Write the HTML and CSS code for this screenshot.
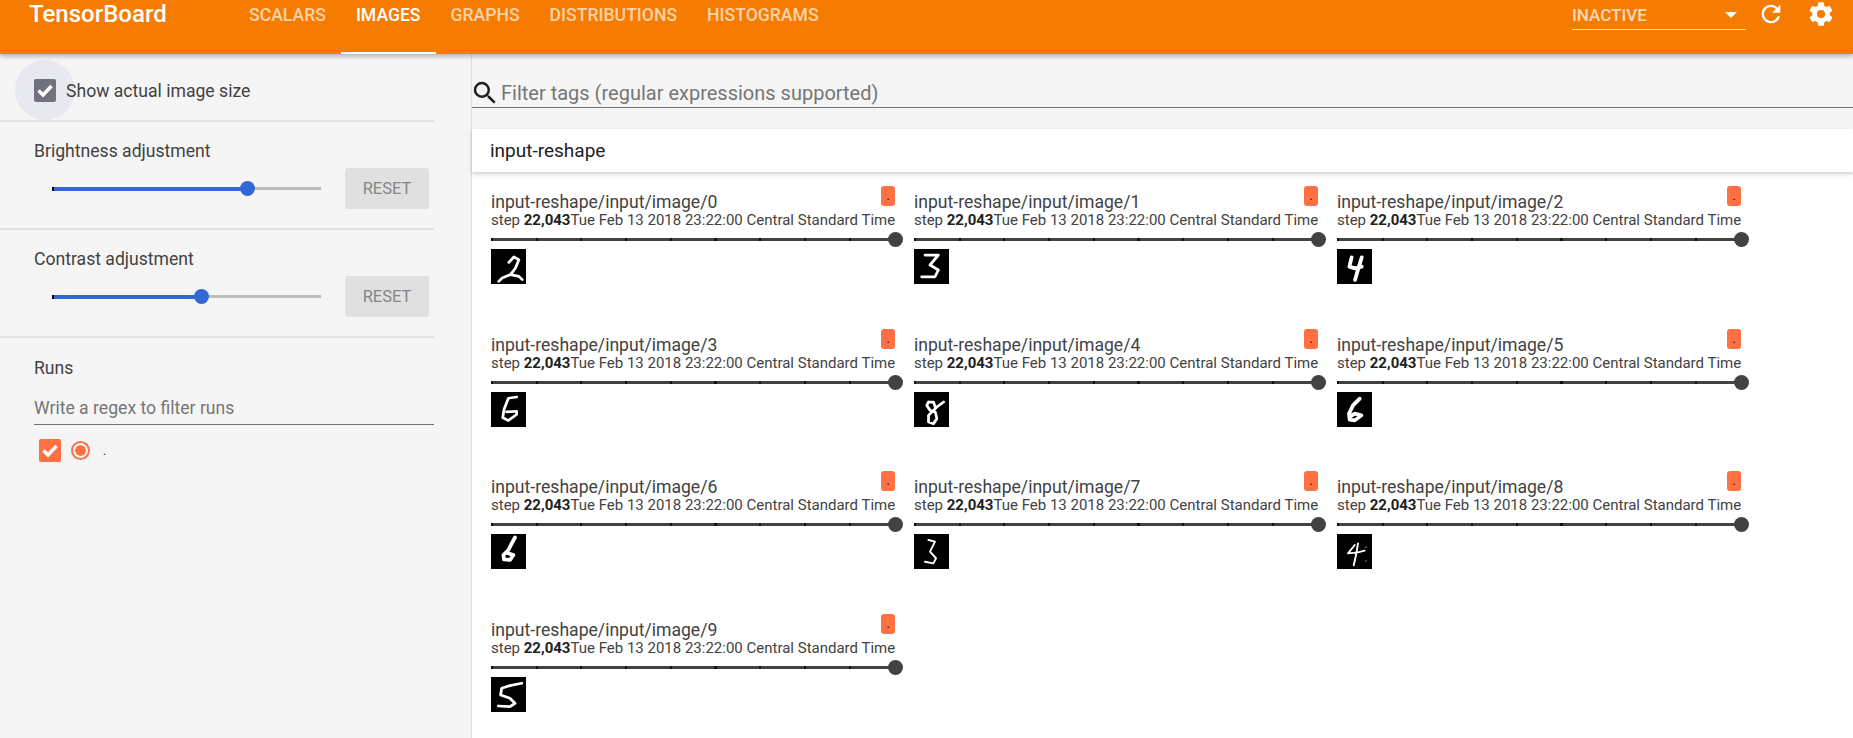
FILE: index.html
```html
<!DOCTYPE html>
<html lang="en">
<head>
  <meta charset="UTF-8">
  <title>TensorBoard</title>
  <link rel="stylesheet" href="styles.css">
</head>
<body>
  <header class="toolbar">
    <div class="brand">TensorBoard</div>
    <nav class="tabs">
      <a class="tab">SCALARS</a>
      <a class="tab active">IMAGES</a>
      <a class="tab">GRAPHS</a>
      <a class="tab">DISTRIBUTIONS</a>
      <a class="tab">HISTOGRAMS</a>
    </nav>
    <div class="status-select">
      <span>INACTIVE</span>
      <span class="arrow"></span>
    </div>
    <svg class="tool-icon reload" viewBox="0 0 24 24"><path d="M17.65 6.35A7.96 7.96 0 0 0 12 4a8 8 0 1 0 7.73 10h-2.08A6 6 0 1 1 12 6c1.66 0 3.14.69 4.22 1.78L13 11h7V4l-2.35 2.35z"/></svg>
    <svg class="tool-icon gear" viewBox="0 0 24 24"><path d="M19.43 12.98c.04-.32.07-.64.07-.98s-.03-.66-.07-.98l2.11-1.65a.5.5 0 0 0 .12-.64l-2-3.46a.5.5 0 0 0-.61-.22l-2.49 1a7.3 7.3 0 0 0-1.69-.98l-.38-2.65A.49.49 0 0 0 14 2h-4a.49.49 0 0 0-.49.42l-.38 2.65c-.61.25-1.17.59-1.69.98l-2.49-1a.49.49 0 0 0-.61.22l-2 3.46a.49.49 0 0 0 .12.64l2.11 1.65c-.04.32-.07.65-.07.98s.03.66.07.98l-2.11 1.65a.5.5 0 0 0-.12.64l2 3.46c.12.22.39.3.61.22l2.49-1c.52.4 1.08.73 1.69.98l.38 2.65c.03.24.24.42.49.42h4c.25 0 .46-.18.49-.42l.38-2.65c.61-.25 1.17-.59 1.69-.98l2.49 1c.23.09.49 0 .61-.22l2-3.46a.5.5 0 0 0-.12-.64l-2.11-1.65zM12 15.5a3.5 3.5 0 1 1 0-7 3.5 3.5 0 0 1 0 7z"/></svg>
  </header>

  <div class="page">
    <aside class="sidebar">
      <section class="side-section size-section">
        <div class="ripple"></div>
        <span class="checkbox grey"><svg viewBox="0 0 22 22"><path d="M4.5 11.5l4.5 4.5 8.5-9"/></svg></span>
        <span class="check-label">Show actual image size</span>
      </section>
      <section class="side-section">
        <div class="side-title">Brightness adjustment</div>
        <div class="adjust-row">
          <div class="range">
            <div class="range-fill fill-brightness"></div>
            <div class="range-thumb"></div>
          </div>
          <button class="reset">RESET</button>
        </div>
      </section>
      <section class="side-section">
        <div class="side-title">Contrast adjustment</div>
        <div class="adjust-row">
          <div class="range">
            <div class="range-fill fill-contrast"></div>
            <div class="range-thumb"></div>
          </div>
          <button class="reset">RESET</button>
        </div>
      </section>
      <section class="runs">
        <div class="side-title">Runs</div>
        <div class="regex">Write a regex to filter runs</div>
        <div class="run-row">
          <span class="checkbox orange"><svg viewBox="0 0 22 22"><path d="M4.5 11.5l4.5 4.5 8.5-9"/></svg></span>
          <span class="radio"></span>
          <span class="run-name">.</span>
        </div>
      </section>
    </aside>

    <main class="main">
      <div class="filter">
        <svg class="search" viewBox="0 0 24 24"><path d="M15.5 14h-.79l-.28-.27A6.47 6.47 0 0 0 16 9.5 6.5 6.5 0 1 0 9.5 16c1.61 0 3.09-.59 4.23-1.57l.27.28v.79l5 4.99L20.49 19l-4.99-5zm-6 0a4.5 4.5 0 1 1 0-9 4.5 4.5 0 0 1 0 9z"/></svg>
        <span>Filter tags (regular expressions supported)</span>
      </div>
      <div class="category">input-reshape</div>
      <div class="cards">
        <article class="card">
          <div class="card-head"><span class="card-title">input-reshape/input/image/0</span><span class="run-chip">.</span></div>
          <div class="card-step">step <b>22,043</b>Tue Feb 13 2018 23:22:00 Central Standard Time</div>
          <div class="step-slider"><div class="step-thumb"></div></div>
          <svg class="digit" viewBox="0 0 28 28"><path d="M14.3 10.7 18.3 6.4 22.3 8.5 19.6 15.2 15.6 20.5 8.9 23.2 6.2 25.9M15.6 20.5 22.3 21.9 25 24.5"/></svg>
        </article>
        <article class="card">
          <div class="card-head"><span class="card-title">input-reshape/input/image/1</span><span class="run-chip">.</span></div>
          <div class="card-step">step <b>22,043</b>Tue Feb 13 2018 23:22:00 Central Standard Time</div>
          <div class="step-slider"><div class="step-thumb"></div></div>
          <svg class="digit" viewBox="0 0 28 28"><path d="M8.8 4.8 19.5 4.8 12.8 12.8 19.5 16.8 16.8 22.2 6.1 22.2"/></svg>
        </article>
        <article class="card">
          <div class="card-head"><span class="card-title">input-reshape/input/image/2</span><span class="run-chip">.</span></div>
          <div class="card-step">step <b>22,043</b>Tue Feb 13 2018 23:22:00 Central Standard Time</div>
          <div class="step-slider"><div class="step-thumb"></div></div>
          <svg class="digit thick" viewBox="0 0 28 28"><path d="M11.7 6.7 9.9 14.1 14.4 15.5 19.8 14.1M19.8 6.7 17.1 15.5 14.4 24.8"/></svg>
        </article>
        <article class="card">
          <div class="card-head"><span class="card-title">input-reshape/input/image/3</span><span class="run-chip">.</span></div>
          <div class="card-step">step <b>22,043</b>Tue Feb 13 2018 23:22:00 Central Standard Time</div>
          <div class="step-slider"><div class="step-thumb"></div></div>
          <svg class="digit" viewBox="0 0 28 28"><path d="M20.5 4 13.9 5 10.4 14 9.4 20.6 13.9 22.8 20.5 18 20.5 15.4 12.5 15.9"/></svg>
        </article>
        <article class="card">
          <div class="card-head"><span class="card-title">input-reshape/input/image/4</span><span class="run-chip">.</span></div>
          <div class="card-step">step <b>22,043</b>Tue Feb 13 2018 23:22:00 Central Standard Time</div>
          <div class="step-slider"><div class="step-thumb"></div></div>
          <svg class="digit" viewBox="0 0 28 28"><path d="M11.6 8 10.2 10.7 12.9 14.7 17 16 18.3 21.3 15.6 25.3 11.6 24 11.6 18.7 15.6 14.7 18.3 12 23.7 8M11.6 8 15.6 8 17 12"/></svg>
        </article>
        <article class="card">
          <div class="card-head"><span class="card-title">input-reshape/input/image/5</span><span class="run-chip">.</span></div>
          <div class="card-step">step <b>22,043</b>Tue Feb 13 2018 23:22:00 Central Standard Time</div>
          <div class="step-slider"><div class="step-thumb"></div></div>
          <svg class="digit thick" viewBox="0 0 28 28"><path d="M18.2 5.3 12.8 10.7 9.6 17.3 10.1 22.1 14.2 22.7 19.5 18.7 14.2 17.3 10.7 19.5"/></svg>
        </article>
        <article class="card">
          <div class="card-head"><span class="card-title">input-reshape/input/image/6</span><span class="run-chip">.</span></div>
          <div class="card-step">step <b>22,043</b>Tue Feb 13 2018 23:22:00 Central Standard Time</div>
          <div class="step-slider"><div class="step-thumb"></div></div>
          <svg class="digit thick" viewBox="0 0 28 28"><path d="M19.2 2.7 16.6 7.5 13.9 12.8 9.9 16.8 10.4 20.3 15.2 20.8 17.9 16.8 12.5 15"/></svg>
        </article>
        <article class="card">
          <div class="card-head"><span class="card-title">input-reshape/input/image/7</span><span class="run-chip">.</span></div>
          <div class="card-step">step <b>22,043</b>Tue Feb 13 2018 23:22:00 Central Standard Time</div>
          <div class="step-slider"><div class="step-thumb"></div></div>
          <svg class="digit thin" viewBox="0 0 28 28"><path d="M11.5 4.8 16.8 6.1 12.8 14.1 17.6 19.4 15.5 23.5 8.8 22.2"/></svg>
        </article>
        <article class="card">
          <div class="card-head"><span class="card-title">input-reshape/input/image/8</span><span class="run-chip">.</span></div>
          <div class="card-step">step <b>22,043</b>Tue Feb 13 2018 23:22:00 Central Standard Time</div>
          <div class="step-slider"><div class="step-thumb"></div></div>
          <svg class="digit thin" viewBox="0 0 28 28"><path d="M14.2 8.8 8.8 15.5 16.8 14.7 22.1 13.3M16.8 7.5 15.5 15.5 13.4 25"/><rect class="digit-speck" x="22.5" y="10" width="1.2" height="1.2"/><rect class="digit-speck" x="22.5" y="21" width="1.2" height="1.2"/></svg>
        </article>
        <article class="card">
          <div class="card-head"><span class="card-title">input-reshape/input/image/9</span><span class="run-chip">.</span></div>
          <div class="card-step">step <b>22,043</b>Tue Feb 13 2018 23:22:00 Central Standard Time</div>
          <div class="step-slider"><div class="step-thumb"></div></div>
          <svg class="digit" viewBox="0 0 28 28"><path d="M24.6 5 15.2 6.9 8.5 9 7.7 14.4 15.2 17 19.2 21 15.2 23.7 5.9 23.2"/></svg>
        </article>
      </div>
    </main>
  </div>
</body>
</html>
```
FILE: styles.css
```css
html, body {
  margin: 0;
  padding: 0;
  height: 100%;
  overflow: hidden;
  background: #f5f5f5;
  font-family: Roboto, sans-serif;
  color: #212121;
}

/* top bar */
.toolbar {
  height: 54px;
  background: #f57c00;
  color: #fff;
  display: flex;
  align-items: flex-start;
  box-shadow: 0 2px 5px rgba(0, 0, 0, 0.3);
  position: relative;
  z-index: 2;
}
.brand {
  font-size: 24px;
  font-weight: 500;
  line-height: 28px;
  margin-left: 29px;
  width: 205px;
}
.tabs {
  display: flex;
  height: 54px;
  flex: 1;
}
.tab {
  box-sizing: border-box;
  padding: 0 15px;
  height: 54px;
  font-size: 17.6px;
  font-weight: 500;
  line-height: 30px;
  color: rgba(255, 255, 255, 0.67);
}
.tab.active {
  color: #fff;
  border-bottom: 2px solid #fff;
}
.status-select {
  box-sizing: border-box;
  width: 174px;
  height: 30px;
  border-bottom: 1px solid rgba(255, 255, 255, 0.75);
  display: flex;
  justify-content: space-between;
  align-items: center;
  font-size: 17px;
  font-weight: 500;
  color: rgba(255, 255, 255, 0.72);
  padding-right: 9px;
}
.arrow {
  border-left: 6px solid transparent;
  border-right: 6px solid transparent;
  border-top: 6px solid #fff;
}
.tool-icon {
  fill: #fff;
  width: 28px;
  height: 28px;
}
.reload {
  margin-left: 11px;
}
.gear {
  margin-left: 22px;
  margin-right: 18px;
}

/* layout */
.page {
  display: flex;
  height: 684px;
}
.sidebar {
  box-sizing: border-box;
  width: 472px;
  flex: none;
  border-right: 1px solid #e0e0e0;
}
.side-section {
  box-sizing: border-box;
  width: 434px;
  height: 108px;
  padding: 0 5px 0 34px;
  border-bottom: 2px solid #e0e0e0;
}
.size-section {
  height: 68px;
  display: flex;
  align-items: center;
  position: relative;
  padding-top: 6px;
}
.ripple {
  position: absolute;
  left: 15px;
  top: 6px;
  width: 60px;
  height: 60px;
  border-radius: 50%;
  background: #e8e8f1;
}
.checkbox {
  width: 22px;
  height: 23px;
  border-radius: 2px;
  flex: none;
  position: relative;
  display: block;
}
.checkbox svg {
  display: block;
  fill: none;
  stroke: #fff;
  stroke-width: 3.4;
}
.checkbox.grey {
  background: #72727f;
}
.checkbox.orange {
  background: #ff7043;
}
.check-label {
  font-size: 17.6px;
  color: #424242;
  margin: 2px 0 0 10px;
  position: relative;
}
.side-title {
  font-size: 17.6px;
  line-height: 20px;
  color: #424242;
  padding-top: 19px;
}
.adjust-row {
  display: flex;
  align-items: center;
  justify-content: space-between;
  margin-top: 7px;
}
.range {
  width: 269px;
  height: 3px;
  margin-left: 18px;
  background: #bdbdbd;
  position: relative;
}
.range-fill {
  height: 4px;
  background: #3367d6;
  border-left: 2px solid #000;
  box-sizing: border-box;
}
.fill-brightness {
  width: 195px;
}
.fill-contrast {
  width: 149px;
}
.range-thumb {
  position: absolute;
  top: -6px;
  width: 15px;
  height: 15px;
  border-radius: 50%;
  background: #3367d6;
}
.fill-brightness + .range-thumb {
  left: 188px;
}
.fill-contrast + .range-thumb {
  left: 142px;
}
.reset {
  width: 84px;
  height: 41px;
  border: none;
  border-radius: 3px;
  background: #e0e0e0;
  color: #858585;
  font-family: Roboto, sans-serif;
  font-size: 16.5px;
}
.runs {
  box-sizing: border-box;
  width: 434px;
  padding: 1px 0 0 34px;
}
.regex {
  margin-top: 20px;
  padding-bottom: 6px;
  font-size: 17.6px;
  line-height: 20px;
  color: #757575;
  border-bottom: 1px solid #737373;
}
.run-row {
  display: flex;
  align-items: center;
  margin: 14px 0 0 5px;
}
.radio {
  box-sizing: border-box;
  width: 19px;
  height: 19px;
  margin-left: 10px;
  border: 2px solid #ff7043;
  border-radius: 50%;
  background: radial-gradient(circle, #ff7043 0 5px, transparent 5.5px);
}
.run-name {
  font-size: 12px;
  margin-left: 13px;
}

/* content */
.main {
  flex: 1;
  min-width: 0;
}
.filter {
  height: 54px;
  box-sizing: border-box;
  padding-top: 24px;
  display: flex;
  align-items: center;
  border-bottom: 1px solid #737373;
  font-size: 20px;
  color: #757575;
}
.search {
  width: 30px;
  height: 30px;
  margin: 0 1px 0 -2px;
  fill: #212121;
  flex: none;
}
.category {
  height: 43px;
  margin-top: 21px;
  padding-left: 18px;
  line-height: 44px;
  font-size: 19px;
  color: #212121;
  background: #fff;
  box-shadow: 0 2px 4px rgba(0, 0, 0, 0.2);
  position: relative;
}
.cards {
  box-sizing: border-box;
  background: #fff;
  height: 566px;
  padding: 13px 0 0 19px;
  display: grid;
  grid-template-columns: repeat(3, 423px);
  grid-auto-rows: 142.6px;
}
.card {
  width: 404px;
  position: relative;
}
.card-head {
  display: flex;
  justify-content: space-between;
  height: 23px;
}
.card-title {
  font-size: 17.6px;
  line-height: 20px;
  padding-top: 7px;
  color: #424242;
}
.run-chip {
  box-sizing: border-box;
  width: 14px;
  height: 20px;
  margin: 1px 0 0 0;
  border-radius: 3px;
  background: #ff7043;
  color: #000;
  font-size: 12px;
  line-height: 20px;
  text-align: center;
}
.card-step {
  margin-top: 4px;
  font-size: 15px;
  line-height: 17px;
  color: #424242;
  white-space: nowrap;
}
.card-step b {
  font-weight: 700;
  color: #212121;
}
.step-slider {
  height: 3px;
  margin-top: 9px;
  position: relative;
  background: repeating-linear-gradient(90deg, #111 0 2px, #424242 2px 44.7px);
}
.step-thumb {
  position: absolute;
  right: -8px;
  top: -6px;
  width: 15px;
  height: 15px;
  border-radius: 50%;
  background: #424242;
}
.digit {
  display: block;
  width: 35px;
  height: 35px;
  margin-top: 8px;
  background: #000;
  fill: none;
  stroke: #fff;
  stroke-width: 2.2;
  stroke-linecap: round;
  stroke-linejoin: round;
}
.digit.thin {
  stroke-width: 1.5;
}
.digit.thick {
  stroke-width: 3;
}
.digit-speck {
  fill: #777;
  stroke: none;
}
```
